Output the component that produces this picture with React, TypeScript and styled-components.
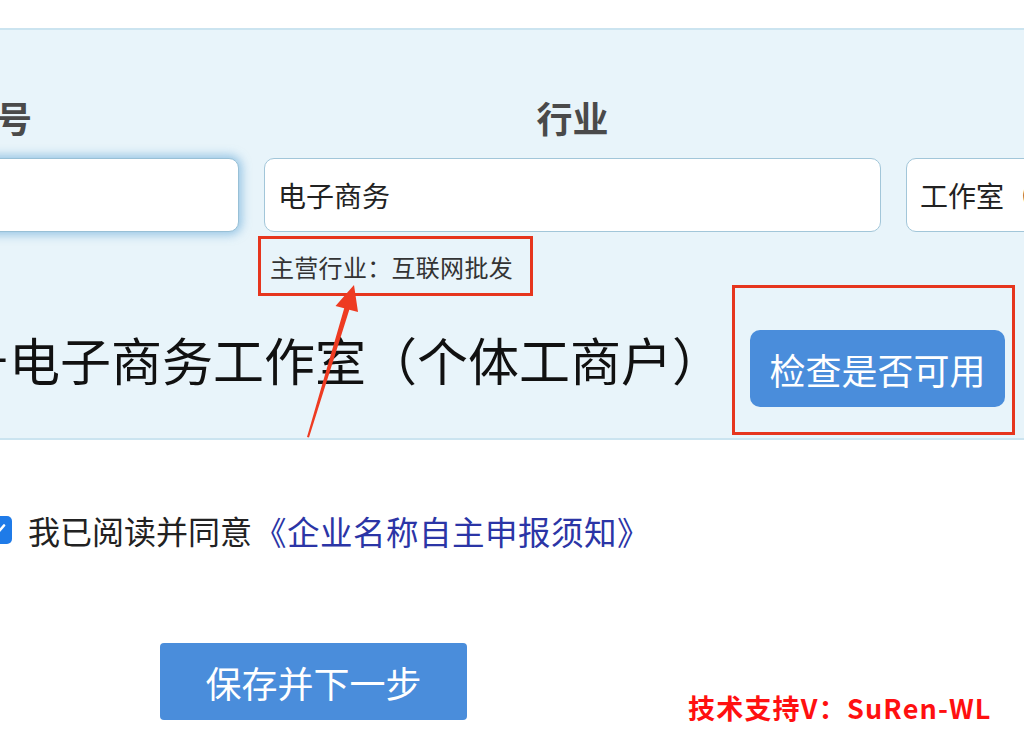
import React from 'react';
import styled, { createGlobalStyle, css } from 'styled-components';

const GlobalStyle = createGlobalStyle`
	html, body {
		margin: 0;
		padding: 0;
		background: #ffffff;
		overflow: hidden;
	}
	body {
		font-family: "Noto Sans CJK SC", "Noto Sans", sans-serif;
	}
`;

const Page = styled.div`
	position: relative;
	width: 1024px;
	height: 747px;
	overflow: hidden;
	padding-top: 28px;
	box-sizing: border-box;
`;

const Panel = styled.section`
	background: #e8f4fa;
	border-top: 2px solid #cbe4f0;
	border-bottom: 2px solid #cbe4f0;
	padding-top: 66px;
	overflow: hidden;
`;

const FieldsRow = styled.div`
	display: grid;
	grid-template-columns: 486px 617px 420px;
	column-gap: 25px;
	align-items: start;
	margin-left: -247px;
`;

const Field = styled.div`
	display: flex;
	flex-direction: column;
	align-items: stretch;
`;

const Label = styled.div`
	height: 43px;
	line-height: 43px;
	text-align: center;
	font-size: 36px;
	font-weight: 700;
	color: #4a4a4a;
	white-space: nowrap;
`;

const TextInput = styled.input<{ $focused?: boolean }>`
	box-sizing: border-box;
	margin-top: 19px;
	height: 74px;
	width: 100%;
	padding: 0 13px;
	border: 1.5px solid #a2c6d9;
	border-radius: 10px;
	background: #ffffff;
	font-family: "Noto Sans CJK SC", sans-serif;
	font-size: 28px;
	color: #222222;
	outline: none;
	${({ $focused }) =>
		$focused &&
		css`
			box-shadow: 0 0 10px 3px rgba(88, 160, 212, 0.55);
			border-color: #98c0d6;
		`}
`;

const HintBox = styled.div`
	align-self: flex-start;
	box-sizing: border-box;
	margin: 4px 0 0 -6px;
	height: 60px;
	padding: 0 17px 0 9px;
	display: inline-flex;
	align-items: center;
	border: 3px solid #e6351d;
	font-size: 24px;
	letter-spacing: 0.3px;
	color: #333333;
	white-space: nowrap;
`;

const NameRow = styled.div`
	display: flex;
	align-items: flex-start;
	height: 142px;
	gap: 27px;
`;

const NameText = styled.div`
	flex-shrink: 0;
	margin: 33px 0 0 -42px;
	font-size: 51px;
	line-height: 60px;
	color: #111111;
	white-space: nowrap;
`;

const CheckWrap = styled.div`
	position: relative;
	flex-shrink: 0;
	margin-top: 34px;

	&::after {
		content: '';
		position: absolute;
		top: -45px;
		left: -18px;
		right: -10px;
		bottom: -28px;
		border: 3px solid #e6351d;
		pointer-events: none;
	}
`;

const BlueButton = styled.button<{ $radius: number; $width: number }>`
	box-sizing: border-box;
	width: ${({ $width }) => $width}px;
	height: 77px;
	padding: 0;
	border: none;
	border-radius: ${({ $radius }) => $radius}px;
	background: #4a8ddb;
	color: #ffffff;
	font-family: "Noto Sans CJK SC", sans-serif;
	font-size: 36px;
	cursor: pointer;
`;

const AgreeRow = styled.label`
	display: flex;
	align-items: center;
	margin-top: 71px;
	height: 38px;
	font-size: 32px;
	color: #222222;
	white-space: nowrap;
`;

const CheckBox = styled.span`
	flex-shrink: 0;
	display: inline-flex;
	align-items: center;
	justify-content: center;
	width: 28px;
	height: 28px;
	margin-left: -16px;
	margin-right: 16px;
	border-radius: 5px;
	background: #1f7be8;
`;

const Link = styled.a`
	margin-left: 2px;
	font-size: 32.5px;
	letter-spacing: 0.5px;
	color: #2b35a6;
	text-decoration: none;
`;

const SaveWrap = styled.div`
	margin: 94px 0 0 160px;
`;

const Watermark = styled.div`
	position: absolute;
	left: 688px;
	top: 694px;
	font-size: 27px;
	line-height: 27px;
	font-weight: 700;
	color: #ff1010;
	letter-spacing: 1.2px;
	white-space: nowrap;
`;

const ArrowLayer = styled.svg`
	position: absolute;
	left: 0;
	top: 0;
	pointer-events: none;
`;

export default function App() {
	return (
		<Page>
			<GlobalStyle />
			<Panel>
				<FieldsRow>
					<Field>
						<Label>字号</Label>
						<TextInput $focused readOnly value="" />
					</Field>
					<Field>
						<Label>行业</Label>
						<TextInput readOnly value="电子商务" />
						<HintBox>主营行业：互联网批发</HintBox>
					</Field>
					<Field>
						<Label>组织形式</Label>
						<TextInput readOnly value="工作室（个体工商户）" />
					</Field>
				</FieldsRow>
				<NameRow>
					<NameText>号电子商务工作室（个体工商户）</NameText>
					<CheckWrap>
						<BlueButton $radius={10} $width={255}>检查是否可用</BlueButton>
					</CheckWrap>
				</NameRow>
			</Panel>

			<AgreeRow>
				<CheckBox>
					<svg width="20" height="20" viewBox="0 0 20 20">
						<path d="M4 10.5 L8.2 14.5 L16 5.5" fill="none" stroke="#fff" strokeWidth="2.6" strokeLinecap="round" strokeLinejoin="round" />
					</svg>
				</CheckBox>
				我已阅读并同意<Link href="#">《企业名称自主申报须知》</Link>
			</AgreeRow>

			<SaveWrap>
				<BlueButton $radius={4} $width={307}>保存并下一步</BlueButton>
			</SaveWrap>

			<ArrowLayer width="1024" height="747" viewBox="0 0 1024 747">
				<polygon
					points="354,285 358,312 349.3,309.7 309,437.5 307,437 344.2,308.3 335.5,306"
					fill="#ee3b22"
				/>
			</ArrowLayer>

			<Watermark>技术支持V：SuRen-WL</Watermark>
		</Page>
	);
}
